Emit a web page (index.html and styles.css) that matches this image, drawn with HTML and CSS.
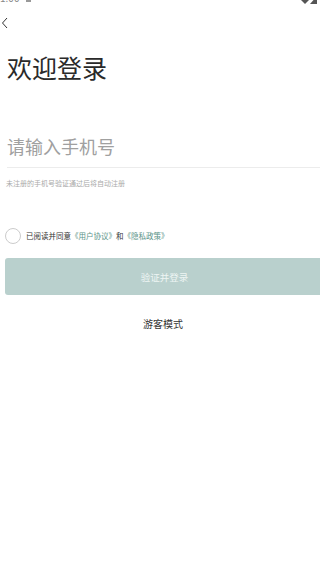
FILE: index.html
```html
<!DOCTYPE html>
<html lang="zh">
<head>
<meta charset="utf-8">
<link rel="stylesheet" href="styles.css">
</head>
<body>
<div class="page">
  <div class="status">
    <span class="time">1:00 <span class="sq"></span></span>
    <span class="sys">
      <svg width="16" height="8" viewBox="0 0 16 8"><path d="M0 0 L8 0 L4 4 Z" fill="#555"/><path d="M16 -4 L16 4 L9 4 Z" fill="#555"/></svg>
    </span>
  </div>
  <div class="nav">
    <svg class="back" width="8" height="12" viewBox="0 0 8 12"><path d="M6 1 L1.5 6 L6 11" fill="none" stroke="#333" stroke-width="1"/></svg>
  </div>
  <h1 class="title">欢迎登录</h1>
  <div class="field">
    <div class="placeholder">请输入手机号</div>
  </div>
  <p class="hint">未注册的手机号验证通过后将自动注册</p>
  <div class="agree">
    <span class="circle"></span>
    <span class="agree-text">已阅读并同意<span class="link">《用户协议》</span>和<span class="link">《隐私政策》</span></span>
  </div>
  <div class="btn">验证并登录</div>
  <div class="guest">游客模式</div>
</div>
</body>
</html>
```
FILE: styles.css
```css
html, body {
  margin: 0;
  padding: 0;
  background: #fff;
  overflow: hidden;
}
body {
  font-family: "Noto Sans CJK SC", "Noto Sans", sans-serif;
  width: 320px;
  height: 579px;
}
.page {
  width: 320px;
}
.status {
  height: 4px;
  display: flex;
  justify-content: space-between;
  overflow: hidden;
  color: #888;
}
.time {
  font-size: 10px;
  line-height: 10px;
  margin-top: -7px;
}
.sq {
  display: inline-block;
  width: 5px;
  height: 6px;
  background: #999;
  margin-left: 4px;
}
.sys {
  margin-right: 3px;
  display: block;
}
.sys svg { display: block; }
.nav {
  height: 30px;
  padding-left: 1px;
  display: flex;
  align-items: flex-start;
}
.back {
  margin-top: 13px;
}
.title {
  margin: 16px 0 0 7px;
  font-size: 25px;
  line-height: 34px;
  font-weight: 400;
  color: #2a2a2a;
}
.field {
  margin: 40px 0 0 7px;
  padding-top: 9px;
  height: 44px;
  border-bottom: 1px solid #ececec;
  box-sizing: border-box;
}
.placeholder {
  font-size: 18px;
  line-height: 26px;
  color: #a0a0a0;
}
.hint {
  margin: 10px 0 0 6px;
  font-size: 7px;
  line-height: 10px;
  color: #aaa;
}
.agree {
  margin: 40px 0 0 5px;
  display: flex;
  align-items: center;
  gap: 5px;
}
.circle {
  width: 14px;
  height: 14px;
  border: 1px solid #ccc;
  border-radius: 50%;
}
.agree-text {
  font-size: 7.5px;
  line-height: 10px;
  color: #333;
}
.link {
  color: #5b9388;
}
.btn {
  margin: 14px -4px 0 5px;
  height: 37px;
  border-radius: 3px;
  background: #b9d0cd;
  color: #eef5f4;
  font-size: 9.5px;
  display: flex;
  align-items: center;
  justify-content: center;
}
.guest {
  margin-top: 22px;
  text-align: center;
  font-size: 10px;
  line-height: 14px;
  color: #333;
  padding-left: 6px;
}
```
